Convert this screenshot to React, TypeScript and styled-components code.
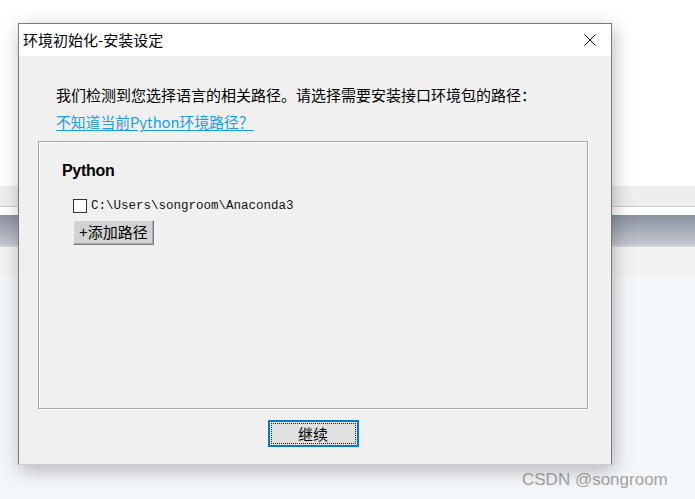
import styled, { createGlobalStyle } from "styled-components";

const GlobalStyle = createGlobalStyle`
  html, body {
    margin: 0;
    padding: 0;
    overflow: hidden;
  }
  #root {
    width: 695px;
    height: 499px;
  }
`;

const cjk = `"Noto Sans CJK SC", "Noto Sans", sans-serif`;

const Desktop = styled.div`
  position: relative;
  width: 695px;
  height: 499px;
  display: flex;
  flex-direction: column;
  background: #ffffff;
`;

/* app behind the dialog */
const Stripe = styled.div<{ h: number; bg: string }>`
  height: ${(p) => p.h}px;
  flex: none;
  background: ${(p) => p.bg};
`;

const Content = styled.div`
  flex: 1;
  background: #f4f7fa;
`;

const Watermark = styled.div`
  position: absolute;
  left: 522px;
  top: 469px;
  font-family: "Liberation Sans", Arial, sans-serif;
  font-size: 17px;
  line-height: 22px;
  color: #a3a3a3;
`;

const Window = styled.div`
  position: absolute;
  left: 18px;
  top: 23px;
  width: 592px;
  height: 440px;
  border: 1px solid #7a7a7a;
  border-bottom-color: #cfcfcf;
  background: #f0f0f0;
  box-shadow: 2px 5px 18px rgba(0, 0, 0, 0.28);
  display: flex;
  flex-direction: column;
`;

const TitleBar = styled.div`
  height: 32px;
  flex: none;
  background: #ffffff;
  display: flex;
  align-items: center;
  justify-content: space-between;
  padding: 0 15px 0 4px;
`;

const Title = styled.span`
  font-family: ${cjk};
  font-size: 15px;
  line-height: 20px;
  color: #000;
`;

const Body = styled.div`
  flex: 1;
  padding: 29px 0 0 19px;
  display: flex;
  flex-direction: column;
`;

const Prompt = styled.div`
  height: 20px;
  margin-left: 18px;
  font-family: ${cjk};
  font-size: 15px;
  line-height: 20px;
  color: #000;
  white-space: nowrap;
`;

const HelpLink = styled.a`
  height: 20px;
  margin: 7px 0 0 18px;
  align-self: flex-start;
  font-family: ${cjk};
  font-size: 14.8px;
  line-height: 20px;
  color: #1a9ee6;
  text-decoration: underline;
  text-underline-offset: 2px;
  cursor: pointer;
`;

const GroupBox = styled.div`
  margin-top: 9px;
  width: 550px;
  height: 268px;
  flex: none;
  box-sizing: border-box;
  border: 1px solid #a6a6a6;
  box-shadow: 1px 1px 0 #ffffff, inset 1px 1px 0 #ffffff;
  padding: 19px 0 0 23px;
  display: flex;
  flex-direction: column;
`;

const LangTitle = styled.div`
  height: 20px;
  font-family: "Liberation Sans", Arial, sans-serif;
  font-weight: bold;
  font-size: 16px;
  line-height: 20px;
  letter-spacing: -0.3px;
  color: #000;
`;

const PathRow = styled.label`
  margin: 17px 0 0 11px;
  display: flex;
  align-items: center;
  height: 16px;
`;

const Check = styled.span`
  width: 12px;
  height: 12px;
  border: 1px solid #333;
  background: #fff;
  flex: none;
`;

const PathText = styled.span`
  margin-left: 4px;
  font-family: "Liberation Mono", "Courier New", monospace;
  font-size: 12.5px;
  line-height: 16px;
  color: #111;
`;

const AddButton = styled.button`
  margin: 6px 0 0 11px;
  align-self: flex-start;
  width: 81px;
  height: 25px;
  padding: 0 0 1px;
  background: #d2d2d2;
  border: 1px solid;
  border-color: #f4f4f4 #7e7e7e #7e7e7e #f4f4f4;
  box-shadow: inset -1px -1px 0 #a8a8a8;
  font-family: ${cjk};
  font-size: 15px;
  line-height: 20px;
  color: #000;
`;

const Footer = styled.div`
  width: 550px;
  margin-top: 11px;
  display: flex;
  justify-content: center;
`;

const ContinueButton = styled.button`
  position: relative;
  width: 91px;
  height: 27px;
  padding: 0;
  background: #e1e1e1;
  border: 2px solid #0078d7;
  font-family: ${cjk};
  font-size: 15px;
  line-height: 20px;
  color: #000;
  &::after {
    content: "";
    position: absolute;
    inset: 1px;
    border: 1px dotted #222;
  }
`;

function CloseIcon() {
  return (
    <svg width="12" height="12" viewBox="0 0 12 12">
      <path d="M0.5 0.5 L11.5 11.5 M11.5 0.5 L0.5 11.5" stroke="#000" strokeWidth="1" />
    </svg>
  );
}

function App() {
  return (
    <>
      <GlobalStyle />
      <Desktop>
        <Stripe h={186} bg="#ffffff" />
        <Stripe h={20} bg="#eeeeee" />
        <Stripe h={1} bg="#c9c9c9" />
        <Stripe h={8} bg="#ffffff" />
        <Stripe h={30} bg="linear-gradient(#8a929f, #c3c7cf)" />
        <Stripe h={2} bg="#d4d4d4" />
        <Stripe h={27} bg="#f2f2f2" />
        <Content />
        <Watermark>CSDN @songroom</Watermark>

        <Window>
          <TitleBar>
            <Title>环境初始化-安装设定</Title>
            <CloseIcon />
          </TitleBar>
          <Body>
            <Prompt>我们检测到您选择语言的相关路径。请选择需要安装接口环境包的路径：</Prompt>
            <HelpLink>不知道当前Python环境路径？</HelpLink>
            <GroupBox>
              <LangTitle>Python</LangTitle>
              <PathRow>
                <Check />
                <PathText>C:\Users\songroom\Anaconda3</PathText>
              </PathRow>
              <AddButton>+添加路径</AddButton>
            </GroupBox>
            <Footer>
              <ContinueButton>继续</ContinueButton>
            </Footer>
          </Body>
        </Window>
      </Desktop>
    </>
  );
}

export default App;
